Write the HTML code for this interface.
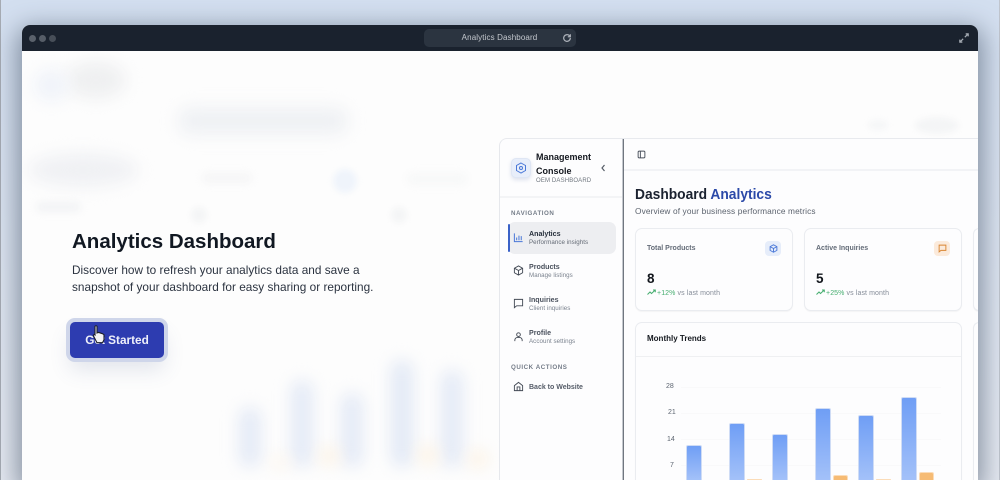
<!DOCTYPE html>
<html><head><meta charset="utf-8"><style>
*{box-sizing:border-box;margin:0;padding:0}
html,body{width:1000px;height:480px;overflow:hidden;background:#eef1f6;font-family:"Liberation Sans",sans-serif}
.a{position:absolute;white-space:nowrap}
#stage{position:relative;width:1000px;height:480px;overflow:hidden;background:linear-gradient(180deg,#d3dff0 0,#e6eaf2 100%)}
#edgeL{left:0;top:0;width:1px;height:480px;background:#a6abb3}
#edgeR{left:999px;top:0;width:1px;height:480px;background:#c0c5ce}
#win{left:22px;top:25px;width:956px;height:455px;border-radius:8px 8px 0 0;background:#fdfdfd;box-shadow:0 8px 26px 5px rgba(70,85,105,.6);overflow:hidden}
#bar{left:0;top:0;width:956px;height:26px;background:#1a222e}
.dot{width:7px;height:7px;border-radius:50%;top:10px}
#url{left:402px;top:4px;width:152px;height:18px;border-radius:5px;background:#2b3440;color:#c4c8ce;font-size:8px;line-height:18px;text-align:center;padding-right:1px;letter-spacing:.12px}
.b{position:absolute;filter:blur(8px)}
#panel{left:477px;top:113px;width:479px;height:342px;background:#fdfdfe;border-top:1px solid #e8eaee;border-left:1px solid #e6e8ec;border-radius:8px 0 0 0;overflow:hidden}
#h1{left:50px;top:204px;font-size:20.5px;font-weight:bold;color:#111822;line-height:26px}
.p{left:50px;font-size:11.8px;color:#2b3340;line-height:17px;letter-spacing:.02px}
#btn{left:48px;top:297px;width:94px;height:36px;border-radius:5px;background:#2d3cb0;color:#eef0fa;font-size:11.8px;font-weight:bold;line-height:36px;text-align:center;box-shadow:0 0 0 4px #cfd6ea,0 12px 20px rgba(90,105,150,.16)}
.nt{font-size:7.1px;color:#27303c;font-weight:bold}
.ns{font-size:6.2px;color:#7a828e;letter-spacing:.05px}
.sec{font-size:6.2px;font-weight:bold;color:#747c88;letter-spacing:.55px}
.card{position:absolute;background:#fdfdfe;border:1px solid #eaecf0;border-radius:7px;box-shadow:0 1px 1px rgba(0,0,0,.04)}
.ct{font-size:7px;font-weight:bold;color:#646c78}
.cv{font-size:13.5px;font-weight:bold;color:#12161c}
.cd{font-size:7px;color:#858c98;letter-spacing:.1px}
.cd b{font-weight:normal;color:#45ad6f}
.yl{font-size:7px;color:#5c6470}
.bar{position:absolute;width:16px;border-radius:2px 2px 0 0;background:linear-gradient(180deg,#6f9ef5 0,#a3c1f9 100%);border:1px solid #cfdcf5;border-bottom:0}
.or{position:absolute;width:15px;border-radius:2px 2px 0 0;background:#f6bb74;border:1px solid #fbdcb8;border-bottom:0}
.gl{position:absolute;left:181px;width:260px;height:1px;background:#f9f9fa}
svg{position:absolute;fill:none}
</style></head><body>
<div id="stage">
<div class="a" id="edgeL"></div><div class="a" id="edgeR"></div>
<div class="a" id="win">
 <div class="b" style="left:44px;top:36px;width:60px;height:38px;background:#eff0f1;border-radius:50%"></div>
 <div class="b" style="left:12px;top:44px;width:35px;height:32px;background:#f0f3f9;border-radius:50%"></div>
 <div class="b" style="left:156px;top:82px;width:170px;height:28px;background:#eff1f4;border-radius:12px"></div>
 <div class="b" style="left:6px;top:128px;width:110px;height:34px;background:#f0f1f4;border-radius:50%"></div>
 <div class="b" style="left:14px;top:177px;width:45px;height:10px;background:#f2f3f5;border-radius:5px;filter:blur(4px)"></div>
 <div class="b" style="left:311px;top:144px;width:24px;height:24px;background:#eff4fb;border-radius:50%;filter:blur(3px)"></div>
 <div class="b" style="left:169px;top:182px;width:16px;height:16px;background:#f4f5f6;border-radius:50%;filter:blur(3px)"></div>
 <div class="b" style="left:369px;top:182px;width:16px;height:16px;background:#f4f5f6;border-radius:50%;filter:blur(3px)"></div>
 <div class="b" style="left:385px;top:148px;width:60px;height:12px;background:#f7f8f8;border-radius:6px;filter:blur(4px)"></div>
 <div class="b" style="left:180px;top:148px;width:50px;height:10px;background:#f5f5f6;border-radius:6px;filter:blur(4px)"></div>
 <div class="b" style="left:893px;top:92px;width:44px;height:17px;background:#f4f5f6;border-radius:50%;filter:blur(3px)"></div>
 <div class="b" style="left:846px;top:95px;width:20px;height:10px;background:#f5f6f7;border-radius:50%;filter:blur(3px)"></div>
 <div class="b" style="left:217px;top:382px;width:22px;height:60px;background:#e4eaf6;border-radius:12px"></div>
 <div class="b" style="left:269px;top:355px;width:22px;height:87px;background:#e4eaf6;border-radius:12px"></div>
 <div class="b" style="left:319px;top:368px;width:22px;height:74px;background:#e4eaf6;border-radius:12px"></div>
 <div class="b" style="left:369px;top:335px;width:22px;height:107px;background:#e2e9f5;border-radius:12px"></div>
 <div class="b" style="left:419px;top:345px;width:22px;height:97px;background:#e4eaf6;border-radius:12px"></div>
 <div class="b" style="left:249px;top:430px;width:18px;height:14px;background:#fcf5ec;border-radius:50%"></div>
 <div class="b" style="left:297px;top:422px;width:20px;height:18px;background:#fcf2e4;border-radius:50%"></div>
 <div class="b" style="left:396px;top:420px;width:20px;height:20px;background:#fcf2e4;border-radius:50%"></div>
 <div class="b" style="left:446px;top:425px;width:20px;height:18px;background:#fcf2e4;border-radius:50%"></div>
 <div class="a" id="bar"></div>
 <div class="a dot" style="left:7px;background:#5a616b"></div>
 <div class="a dot" style="left:17px;background:#565d67"></div>
 <div class="a dot" style="left:27px;background:#474e58"></div>
 <div class="a" id="url">Analytics Dashboard</div>
 <svg style="left:540px;top:8px" width="10" height="10" viewBox="0 0 24 24" stroke="#a9aeb6" stroke-width="3"><path d="M20 12a8 8 0 1 1-2.500-5.800L20 9M20 3v6h-6"/></svg>
 <svg style="left:937px;top:8px" width="10" height="10" viewBox="0 0 24 24" stroke="#a4aab2" stroke-width="3"><path d="M14 10l8-8M16 2h6v6M10 14l-8 8M2 16v6h6"/></svg>

 <div class="a" id="h1">Analytics Dashboard</div>
 <div class="a p" style="top:237px">Discover how to refresh your analytics data and save a</div>
 <div class="a p" style="top:254px">snapshot of your dashboard for easy sharing or reporting.</div>
 <div class="a" id="btn">Get Started</div>
 <svg style="left:70px;top:300px" width="15" height="19" viewBox="0 0 15 19"><path d="M3 1.500c0-1 2-1 2 0V8l1-.5 1.500.2 1.300.5 1.700.5 1.500 1v5l-1.500 3H5L1.500 11c-.5-1 .5-1.800 1.500-1V1.500z" fill="#f4f4f6" stroke="#1b1e26" stroke-width="1.100"/></svg>

 <div class="a" id="panel">
  <div class="a" style="left:122px;top:0;width:2px;height:341px;background:linear-gradient(90deg,#c4c8ce 50%,#70767f 50%)"></div>
  <div class="a" style="left:124px;top:30px;width:355px;height:2px;background:#f2f3f6"></div>
  <div class="a" style="left:0;top:57px;width:122px;height:2px;background:#f3f4f6"></div>
  <div class="a" style="left:11px;top:19px;width:20px;height:20px;border-radius:5px;background:#e8eefa;border:1px solid #dfe6f4;box-shadow:0 2px 4px rgba(80,100,160,.18)"></div>
  <svg style="left:15px;top:23px" width="12" height="12" viewBox="0 0 24 24" stroke="#4a78d8" stroke-width="2"><path d="M12 2l9 5v10l-9 5-9-5V7z"/><circle cx="12" cy="12" r="3"/></svg>
  <div class="a" style="left:36px;top:11px;font-size:9px;font-weight:bold;color:#14181f;line-height:14px">Management<br>Console</div>
  <div class="a" style="left:36px;top:39px;font-size:6px;color:#70777f;letter-spacing:.15px">OEM DASHBOARD</div>
  <svg style="left:100px;top:25px" width="7" height="8" viewBox="0 0 7 8" stroke="#555c66" stroke-width="1.200"><path d="M4.500 1L2 4l2.500 3"/></svg>
  <div class="a sec" style="left:11px;top:71px">NAVIGATION</div>
  <div class="a" style="left:8px;top:83px;width:108px;height:32px;border-radius:7px;background:#edeef1"></div>
  <div class="a" style="left:8px;top:85px;width:2px;height:28px;border-radius:2px;background:#3a62c8"></div>
  <svg style="left:13px;top:93px" width="11" height="11" viewBox="0 0 24 24" stroke="#4a78d8" stroke-width="2.200"><path d="M3 3v18h18M8 18v-6M13 18V8M18 18v-9"/></svg>
  <div class="a nt" style="left:29px;top:91px">Analytics</div>
  <div class="a ns" style="left:29px;top:100px;color:#636a75">Performance insights</div>
  <svg style="left:13px;top:126px" width="11" height="11" viewBox="0 0 24 24" stroke="#434a55" stroke-width="2"><path d="M12 2l9 5v10l-9 5-9-5V7zM3 7l9 5 9-5M12 12v10"/></svg>
  <div class="a nt" style="left:29px;top:124px;color:#4a515d">Products</div>
  <div class="a ns" style="left:29px;top:133px">Manage listings</div>
  <svg style="left:13px;top:159px" width="11" height="11" viewBox="0 0 24 24" stroke="#434a55" stroke-width="2"><path d="M3 3h18v14H8l-5 4z"/></svg>
  <div class="a nt" style="left:29px;top:157px;color:#4a515d">Inquiries</div>
  <div class="a ns" style="left:29px;top:166px">Client inquiries</div>
  <svg style="left:13px;top:192px" width="11" height="11" viewBox="0 0 24 24" stroke="#434a55" stroke-width="2"><circle cx="12" cy="8" r="4"/><path d="M4 22v-2a6 6 0 0 1 6-6h4a6 6 0 0 1 6 6v2"/></svg>
  <div class="a nt" style="left:29px;top:190px;color:#4a515d">Profile</div>
  <div class="a ns" style="left:29px;top:199px">Account settings</div>
  <div class="a sec" style="left:11px;top:225px">QUICK ACTIONS</div>
  <svg style="left:13px;top:242px" width="11" height="11" viewBox="0 0 24 24" stroke="#434a55" stroke-width="2"><path d="M3 10l9-7 9 7v11H3zM9 21v-8h6v8"/></svg>
  <div class="a nt" style="left:29px;top:245px;font-size:7px;color:#555c68">Back to Website</div>

  <svg style="left:137px;top:11px" width="9" height="9" viewBox="0 0 24 24" stroke="#4a515c" stroke-width="2.500"><rect x="3" y="3" width="18" height="18" rx="3"/><path d="M9 3v18"/></svg>
  <div class="a" style="left:135px;top:47px;font-size:15px;font-weight:bold;color:#1b2230;transform:scaleX(.92);transform-origin:left">Dashboard <span style="color:#2b49a8">Analytics</span></div>
  <div class="a" style="left:135px;top:67px;font-size:8.300px;color:#5c636e;letter-spacing:.12px">Overview of your business performance metrics</div>

  <div class="card" style="left:135px;top:89px;width:158px;height:83px"></div>
  <div class="a ct" style="left:147px;top:106px">Total Products</div>
  <div class="a" style="left:265px;top:102px;width:16px;height:15px;border-radius:4px;background:#e6edfa"></div>
  <svg style="left:268.500px;top:105px" width="9" height="9" viewBox="0 0 24 24" stroke="#4a78d8" stroke-width="2.500"><path d="M12 2l9 5v10l-9 5-9-5V7zM3 7l9 5 9-5M12 12v10"/></svg>
  <div class="a cv" style="left:147px;top:132px">8</div>
  <svg style="left:147px;top:150px" width="9" height="7" viewBox="0 0 9 7" stroke="#45ad6f" stroke-width="1"><path d="M.5 5.500L3 3l1.500 1.500L8 1.200M6 1h2.300v2.200"/></svg>
  <div class="a cd" style="left:157px;top:151px"><b>+12%</b> vs last month</div>

  <div class="card" style="left:304px;top:89px;width:158px;height:83px"></div>
  <div class="a ct" style="left:316px;top:106px">Active Inquiries</div>
  <div class="a" style="left:434px;top:102px;width:16px;height:15px;border-radius:4px;background:#fbeadb"></div>
  <svg style="left:437.500px;top:105px" width="9" height="9" viewBox="0 0 24 24" stroke="#d98532" stroke-width="2.500"><path d="M3 3h18v14H8l-5 4z"/></svg>
  <div class="a cv" style="left:316px;top:132px">5</div>
  <svg style="left:316px;top:150px" width="9" height="7" viewBox="0 0 9 7" stroke="#45ad6f" stroke-width="1"><path d="M.5 5.500L3 3l1.500 1.500L8 1.200M6 1h2.300v2.200"/></svg>
  <div class="a cd" style="left:326px;top:151px"><b>+25%</b> vs last month</div>
  <div class="card" style="left:473px;top:89px;width:6px;height:83px;border-right:0;border-radius:7px 0 0 7px"></div>

  <div class="card" style="left:135px;top:183px;width:327px;height:158px;border-bottom:0;border-radius:7px 7px 0 0"></div>
  <div class="a" style="left:136px;top:217px;width:325px;height:1px;background:#eff0f2"></div>
  <div class="a" style="left:147px;top:195px;font-size:8px;font-weight:bold;color:#161a20">Monthly Trends</div>
  <div class="card" style="left:473px;top:183px;width:6px;height:158px;border-width:1px 0 0 1px;border-radius:7px 0 0 0"></div>
  <div class="gl" style="top:248px"></div><div class="gl" style="top:274px"></div><div class="gl" style="top:300px"></div><div class="gl" style="top:326px"></div>
  <div class="a yl" style="left:166px;top:244px">28</div>
  <div class="a yl" style="left:168px;top:270px">21</div>
  <div class="a yl" style="left:167px;top:297px">14</div>
  <div class="a yl" style="left:170px;top:323px">7</div>
  <div class="bar" style="left:186px;top:306px;height:35px"></div>
  <div class="bar" style="left:229px;top:284px;height:57px"></div>
  <div class="bar" style="left:272px;top:295px;height:46px"></div>
  <div class="bar" style="left:315px;top:269px;height:72px"></div>
  <div class="bar" style="left:358px;top:276px;height:65px"></div>
  <div class="bar" style="left:401px;top:258px;height:83px"></div>
  <div class="or" style="left:247px;top:340px;height:1px;background:#f8d6ae"></div>
  <div class="or" style="left:333px;top:336px;height:5px"></div>
  <div class="or" style="left:376px;top:340px;height:1px;background:#f8d6ae"></div>
  <div class="or" style="left:419px;top:333px;height:8px"></div>
 </div>
</div>
</div>
</body></html>
